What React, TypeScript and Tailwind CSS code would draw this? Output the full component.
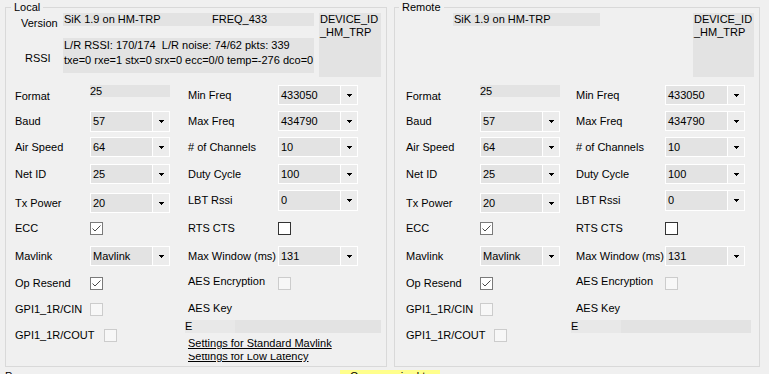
import React from 'react';

type CheckState = 'checked' | 'empty' | 'disabled';

/**
 * SiK radio settings form (Local / Remote group boxes)
 */
function Arrow() {
  return (
    <svg width="5" height="3" viewBox="0 0 5 3" shapeRendering="crispEdges">
      <rect x="0" y="0" width="5" height="1" fill="#000" />
      <rect x="1" y="1" width="3" height="1" fill="#000" />
      <rect x="2" y="2" width="1" height="1" fill="#000" />
    </svg>
  );
}

function Combo({ value }: { value: string }) {
  return (
    <div className="flex h-full w-[80px] border border-white">
      <div className="flex flex-1 items-center bg-[#e3e3e3] pl-[2px] leading-[13px]">{value}</div>
      <div className="flex w-[17px] items-center justify-center border-l border-white bg-[#ececec]">
        <Arrow />
      </div>
    </div>
  );
}

function Check({ state }: { state: CheckState }) {
  const box =
    state === 'checked'
      ? 'border-[#7a7a7a] bg-white'
      : state === 'empty'
        ? 'border-[#333333] bg-white'
        : 'border-[#cccccc] bg-[#f7f7f7]';
  return (
    <div className={`h-[13px] w-[13px] shrink-0 border ${box}`}>
      {state === 'checked' && (
        <svg width="11" height="11" viewBox="0 0 11 11">
          <path d="M1.5 5.5 L4 8 L9.5 2.5" fill="none" stroke="#4a4a4a" strokeWidth="1" />
        </svg>
      )}
    </div>
  );
}

function Row({
  label,
  className,
  labelClass,
  children,
}: {
  label: string;
  className: string;
  labelClass: string;
  children?: React.ReactNode;
}) {
  return (
    <div className={`flex ${className}`}>
      <div className={`shrink-0 whitespace-nowrap leading-[13px] ${labelClass}`}>{label}</div>
      {children}
    </div>
  );
}

function Panel({ remote }: { remote?: boolean }) {
  // column offsets differ a little between the two group boxes
  const leftW = remote ? 'w-[176px]' : 'w-[179px]';
  const lbl = remote ? 'w-[85px] pl-[11px]' : 'w-[84px] pl-[9px]';
  const lblCout = remote ? 'w-[99px] pl-[11px]' : 'w-[98px] pl-[9px]';
  const rlbl = remote ? 'w-[94px] pl-[5px]' : 'w-[93px] pl-[3px]';
  const rlblPad = remote ? 'pl-[5px]' : 'pl-[3px]';

  return (
    <fieldset
      className={`h-[366px] shrink-0 border border-[#d9d9d9] ${remote ? 'w-[366px]' : 'w-[382px]'}`}
    >
      <legend className={`px-[3px] leading-[12px] ${remote ? 'ml-[4px]' : 'ml-[5px]'}`}>
        {remote ? 'Remote' : 'Local'}
      </legend>

      {/* Header: version / rssi / device id */}
      {remote ? (
        <div className="flex h-[64px]">
          <div className="ml-[58px] h-[13px] w-[147px] bg-[#e3e3e3] pl-[1px] leading-[13px]">
            SiK 1.9 on HM-TRP
          </div>
          <div className="ml-[93px] h-[64px] w-[61px] bg-[#e3e3e3] pl-[1px] leading-[13px]">
            DEVICE_ID
            <br />
            _HM_TRP
          </div>
        </div>
      ) : (
        <div className="flex h-[64px]">
          <div className="flex w-[57px] flex-col leading-[13px]">
            <div className="h-[25px] pl-[15px] pt-[4px]">Version</div>
            <div className="pl-[19px] pt-[14px]">RSSI</div>
          </div>
          <div className="flex w-[251px] flex-col">
            <div className="flex h-[13px] bg-[#e3e3e3] leading-[13px]">
              <span className="w-[149px] pl-[1px]">SiK 1.9 on HM-TRP</span>
              <span>FREQ_433</span>
            </div>
            <div className="mt-[12px] h-[35px] whitespace-pre bg-[#e3e3e3] pl-[1px] leading-[15px]">
              <div>L/R RSSI: 170/174  L/R noise: 74/62 pkts: 339</div>
              <div>txe=0 rxe=1 stx=0 srx=0 ecc=0/0 temp=-276 dco=0</div>
            </div>
          </div>
          <div className="ml-[5px] h-[64px] w-[62px] bg-[#e3e3e3] pl-[1px] leading-[13px]">
            DEVICE_ID
            <br />
            _HM_TRP
          </div>
        </div>
      )}

      {/* Body */}
      <div className="mt-[8px] flex">
        <div className={`flex shrink-0 flex-col ${leftW}`}>
          <Row label="Format" className="h-[22px] items-center" labelClass={lbl}>
            <div className="h-[12px] w-[80px] self-start bg-[#e3e3e3] leading-[12px]">25</div>
          </Row>
          <Row label="Baud" className="mt-[4px] h-[21px] items-center" labelClass={lbl}>
            <Combo value="57" />
          </Row>
          <Row label="Air Speed" className="mt-[5px] h-[20px] items-center" labelClass={lbl}>
            <Combo value="64" />
          </Row>
          <Row label="Net ID" className="mt-[7px] h-[20px] items-center" labelClass={lbl}>
            <Combo value="25" />
          </Row>
          <Row label="Tx Power" className="mt-[9px] h-[20px] items-center" labelClass={lbl}>
            <Combo value="20" />
          </Row>
          <Row label="ECC" className="mt-[7px] h-[16px] items-center" labelClass={lbl}>
            <Check state="checked" />
          </Row>
          <Row label="Mavlink" className="mt-[10px] h-[20px] items-center" labelClass={lbl}>
            <Combo value="Mavlink" />
          </Row>
          <Row label="Op Resend" className="mt-[10px] h-[15px] items-center" labelClass={lbl}>
            <Check state="checked" />
          </Row>
          <Row label="GPI1_1R/CIN" className="mt-[11px] h-[15px] items-center" labelClass={lbl}>
            <Check state="disabled" />
          </Row>
          <Row label="GPI1_1R/COUT" className="mt-[11px] h-[15px] items-center" labelClass={lblCout}>
            <Check state="disabled" />
          </Row>
        </div>

        <div className="flex flex-1 flex-col">
          <Row label="Min Freq" className="h-[20px] items-center" labelClass={rlbl}>
            <Combo value="433050" />
          </Row>
          <Row label="Max Freq" className="mt-[6px] h-[20px] items-center" labelClass={rlbl}>
            <Combo value="434790" />
          </Row>
          <Row label="# of Channels" className="mt-[6px] h-[20px] items-center" labelClass={rlbl}>
            <Combo value="10" />
          </Row>
          <Row label="Duty Cycle" className="mt-[7px] h-[20px] items-center" labelClass={rlbl}>
            <Combo value="100" />
          </Row>
          <Row label="LBT Rssi" className="mt-[6px] h-[21px] items-center" labelClass={rlbl}>
            <Combo value="0" />
          </Row>
          <Row label="RTS CTS" className="mt-[9px] h-[16px] items-center" labelClass={rlbl}>
            <Check state="empty" />
          </Row>
          <Row label="Max Window (ms)" className="mt-[10px] h-[20px] items-center" labelClass={rlbl}>
            <Combo value="131" />
          </Row>
          <Row label="AES Encryption" className="mt-[9px] h-[16px] items-start" labelClass={rlbl}>
            <div className="mt-[2px]">
              <Check state="disabled" />
            </div>
          </Row>
          <div className={`mt-[11px] h-[13px] leading-[13px] ${rlblPad}`}>AES Key</div>
          <div
            className={`mt-[5px] flex h-[13px] leading-[13px] ${remote ? 'w-[180px]' : 'w-[196px]'}`}
          >
            <div className="w-[50px] bg-[#e8e8e8]">E</div>
            <div className="flex-1 bg-[#e3e3e3]" />
          </div>
          {!remote && (
            <>
              <div className="mt-[4px] h-[13px] pl-[3px] leading-[13px] underline">
                Settings for Standard Mavlink
              </div>
              <div className="mt-[4px] h-[9px] overflow-hidden pl-[3px] leading-[13px]">
                <div className="-mt-[4px] underline">Settings for Low Latency</div>
              </div>
            </>
          )}
        </div>
      </div>
    </fieldset>
  );
}

export default function App() {
  return (
    <div className="h-[374px] w-[769px] overflow-hidden bg-[#f0f0f0] font-['Liberation_Sans',Arial,sans-serif] text-[11px] text-black">
      <div className="ml-[5px] mt-[1px] flex gap-[7px]">
        <Panel />
        <Panel remote />
      </div>

      {/* Status strip, mostly cut off by the window edge */}
      <div className="mt-[3px] flex h-[13px] leading-[13px]">
        <div className="w-[340px] pl-[5px]">Progress</div>
        <div className="w-[100px] overflow-hidden whitespace-nowrap bg-[#ffff8c] pl-[10px]">
          Copy required to remote
        </div>
      </div>
    </div>
  );
}
